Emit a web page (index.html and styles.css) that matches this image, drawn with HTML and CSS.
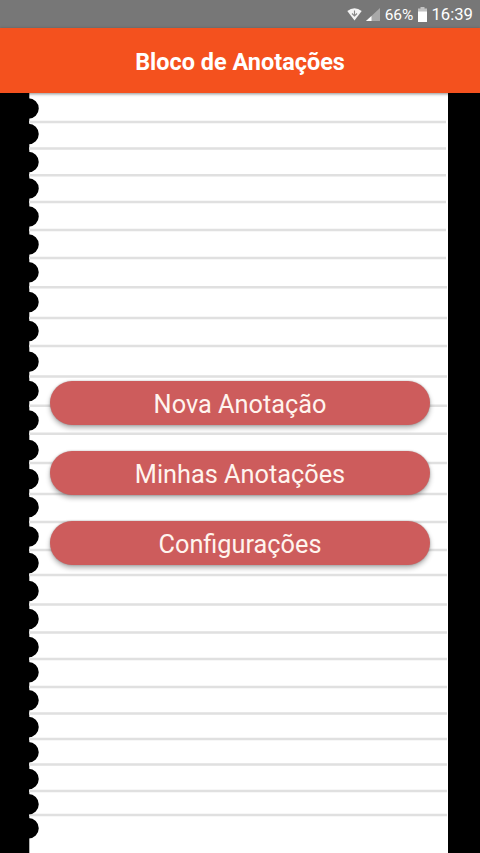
FILE: index.html
```html
<!DOCTYPE html>
<html lang="pt-BR">
<head>
<meta charset="utf-8">
<title>Bloco de Anotações</title>
<link rel="stylesheet" href="styles.css">
</head>
<body>
<div class="screen">
  <div class="status">
    <svg class="wifi" width="15" height="13" viewBox="0 0 15 13"><path d="M.3 3Q7.500-2.500 14.700 3L7.500 12.500Z" fill="#f4f4f4"/><path d="M7.500 2.500v5M5 5.500 7.500 8 10 5.500" fill="none" stroke="#888" stroke-width="1.100"/></svg>
    <svg class="signal" width="14" height="13" viewBox="0 0 14 13"><path d="M14 0v13H0Z" fill="#a8a8a8"/><path d="M5.500 7.900V13H0Z" fill="#fff"/></svg>
    <span class="percent">66%</span>
    <svg class="battery" width="9" height="15" viewBox="0 0 9 15"><path d="M2.500 0h4v1.500H9v4H0v-4h2.500Z" fill="#c2c2c2"/><path d="M0 4.500h9V15H0Z" fill="#fff"/></svg>
    <span class="clock">16:39</span>
  </div>
  <header class="bar"><h1 class="title">Bloco de Anotações</h1></header>
  <main class="page">
    <svg class="notebook" width="480" height="760" viewBox="0 93 480 760">
      <path d="M29.300 93H448v760H29.300Z" fill="#fff"/>
      <path class="rules" d="M29 122H446M29 148.500H446M29 175.200H446M29 202H446M29 230H446M29 258H446M29 287.300H447M29 318H447M29 346H447M29 376.500H447M29 405.700H447M29 433.800H447M29 463H447M29 494H447M29 522H447M29 550H447M29 575H447M29 604.500H447M29 632.500H447M29 659H447M29 687H447M29 713.500H447M29 739H447M29 764.500H447M29 791H447M29 815H447"/>
      <path class="holes" d="M28.500 108.500h0M28.500 134h0M28.500 162h0M28.500 188.500h0M28.500 216.500h0M28.500 244.500h0M28.500 272.300h0M28.500 302h0M28.500 331h0M28.500 361.700h0M28.500 391h0M28.500 420.500h0M28.500 450h0M28.500 479h0M28.500 507h0M28.500 536.500h0M28.500 563h0M28.500 591h0M28.500 619h0M28.500 647h0M28.500 672.300h0M28.500 700.300h0M28.500 727h0M28.500 752.300h0M28.500 779h0M28.500 804.300h0M28.500 828.300h0"/>
    </svg>
    <nav class="menu">
      <button class="action">Nova Anotação</button>
      <button class="action">Minhas Anotações</button>
      <button class="action">Configurações</button>
    </nav>
  </main>
</div>
</body>
</html>
```
FILE: styles.css
```css
body {
  margin: 0;
  background: #000;
  font-family: Roboto, "Liberation Sans", sans-serif;
}

.screen {
  width: 480px;
  height: 853px;
  display: flex;
  flex-direction: column;
  overflow: hidden;
}

.status {
  height: 28px;
  box-sizing: border-box;
  padding-right: 7px;
  display: flex;
  align-items: center;
  justify-content: flex-end;
  background: #777;
  color: #fff;
  line-height: 28px;
}

.signal {
  margin: 0 5px 0 4px;
}

.percent {
  font-size: 15.500px;
  padding-top: 2px;
}

.battery {
  margin: 0 4px 0 5px;
}

.clock {
  font-size: 16.700px;
  padding-top: 2px;
}

.bar {
  height: 65px;
  display: flex;
  align-items: center;
  justify-content: center;
  background: #f4511e;
  box-shadow: 0 1px 3px rgba(0, 0, 0, 0.45);
  z-index: 1;
}

.title {
  margin: 0;
  padding-top: 2px;
  color: #fff;
  font-size: 23.450px;
  font-weight: 700;
  line-height: 28px;
}

.page {
  flex: 1;
  display: grid;
  grid-template-columns: 480px;
}

.notebook,
.menu {
  grid-area: 1 / 1;
}

.rules {
  stroke: #e0e0e0;
  stroke-width: 2.500;
}

.holes {
  stroke: #000;
  stroke-width: 20.500;
  stroke-linecap: round;
}

.menu {
  display: flex;
  flex-direction: column;
  justify-content: center;
  gap: 26px;
  padding: 0 50px;
}

.action {
  height: 44px;
  border: 0;
  border-radius: 22px;
  padding: 4px 0 0;
  background: #cd5c5c;
  color: #fff4ee;
  font: 400 25.300px/40px Roboto, "Liberation Sans", sans-serif;
  box-shadow: 0 0 2px rgba(0, 0, 0, 0.25), 0 3px 5px rgba(0, 0, 0, 0.3);
}
```
